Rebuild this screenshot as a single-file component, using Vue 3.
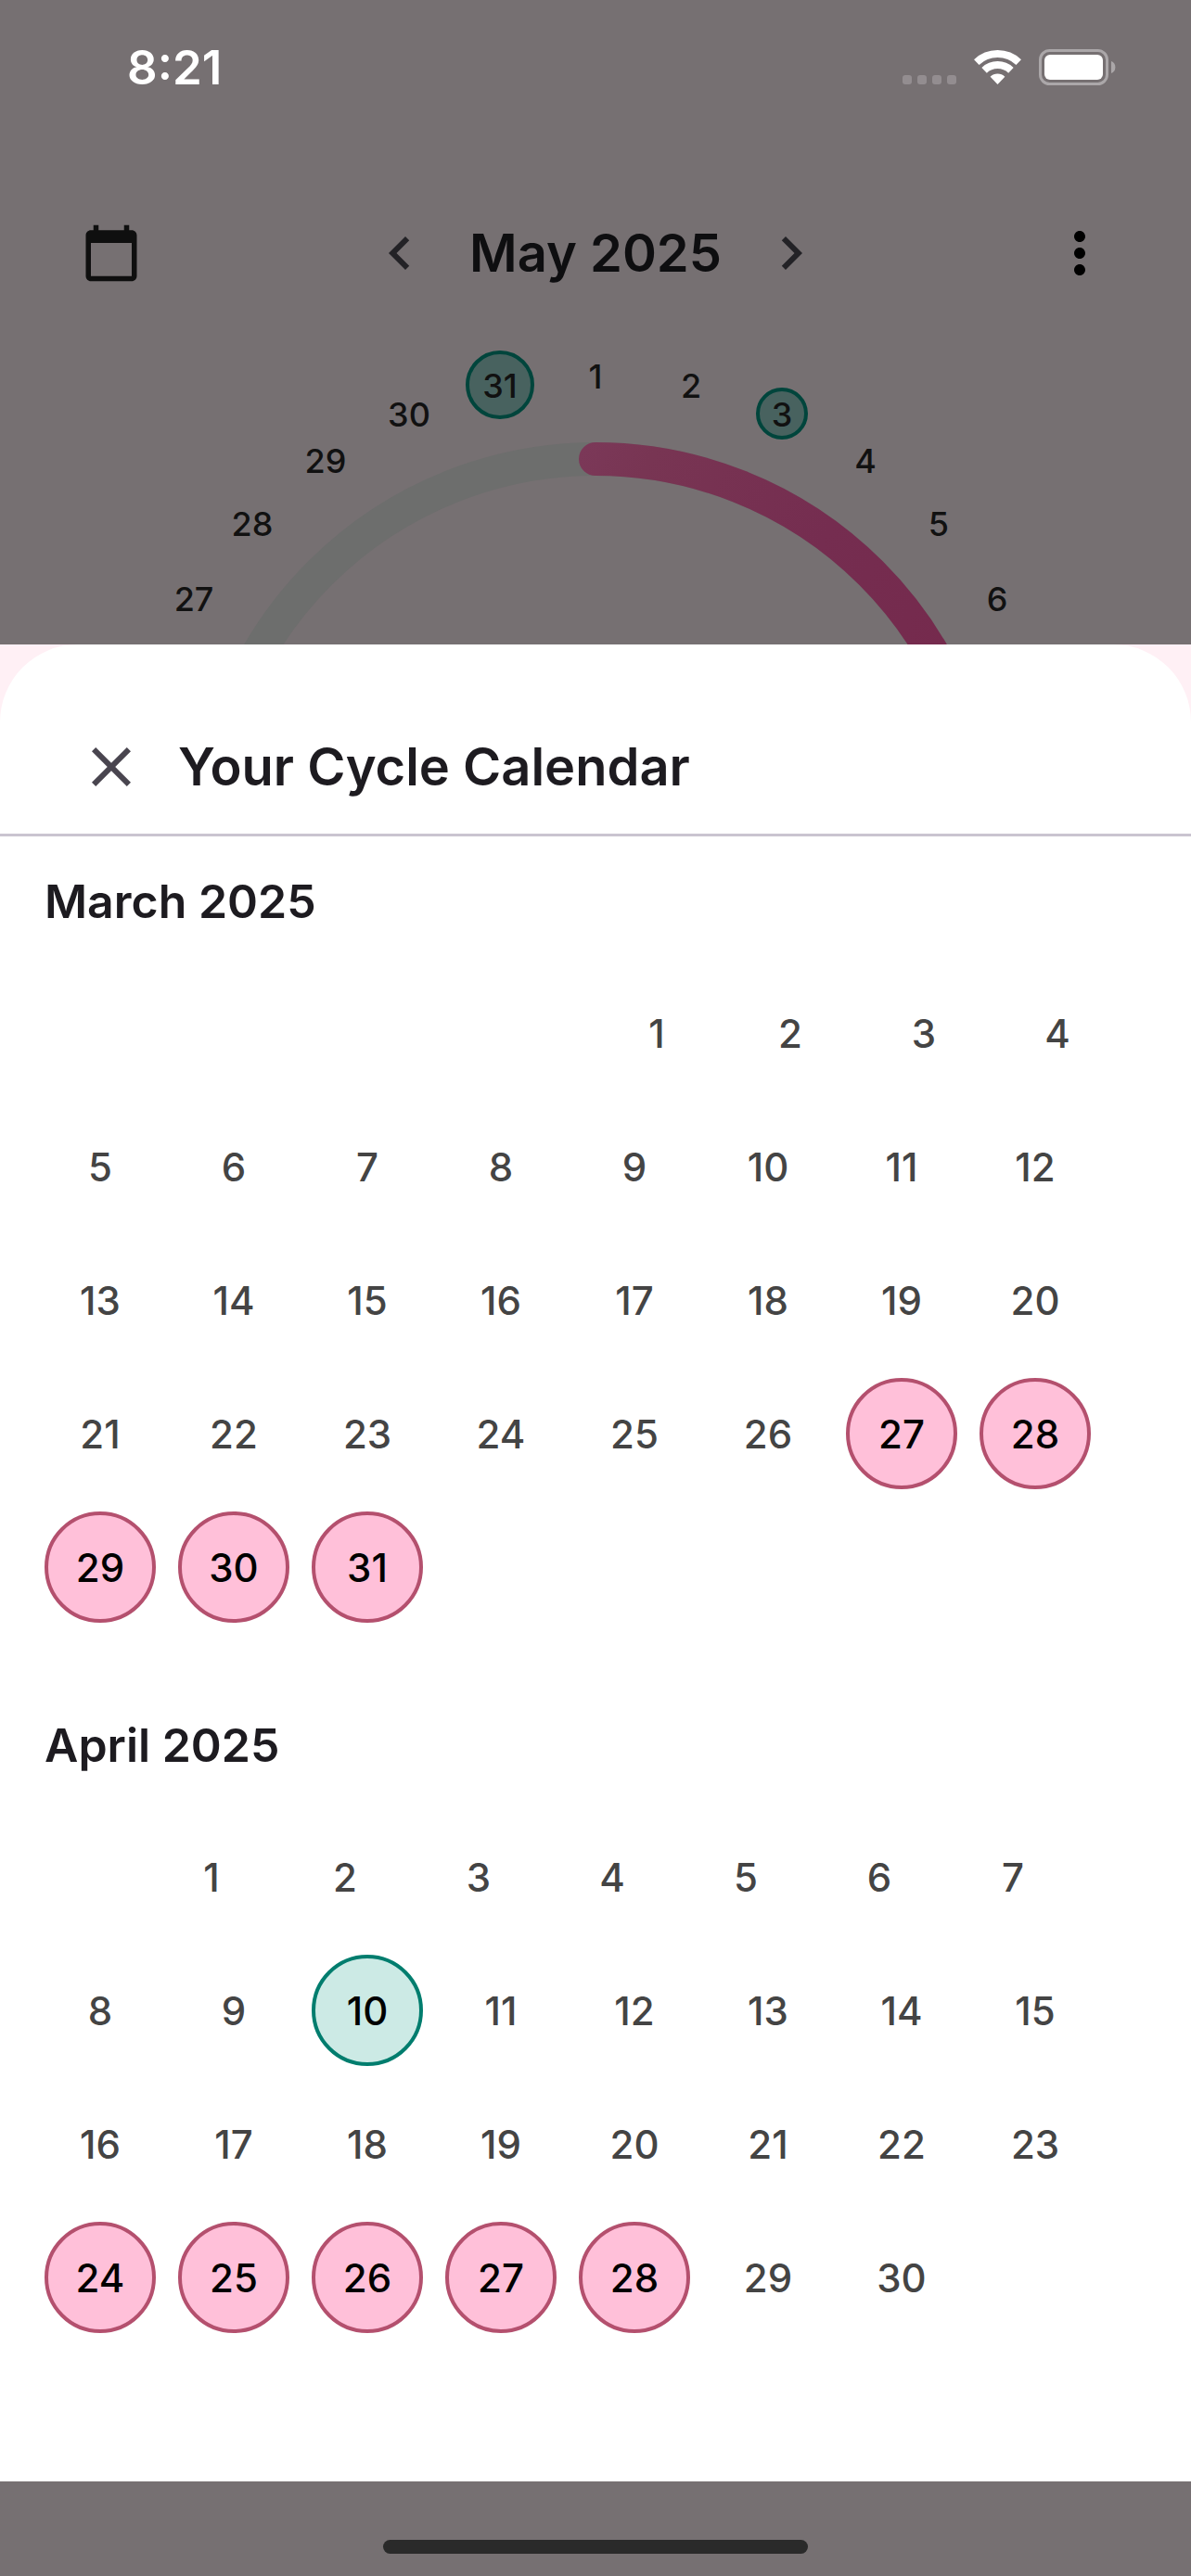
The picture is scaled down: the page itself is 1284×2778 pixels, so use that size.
<script setup>
const months = [
  { name: 'March 2025', lead: 6, days: 31, period: [27, 28, 29, 30, 31], ovulation: [] },
  { name: 'April 2025', lead: 1, days: 30, period: [24, 25, 26, 27, 28], ovulation: [10] },
]

const dayClass = (month, day) => ({
  period: month.period.includes(day),
  ovulation: month.ovulation.includes(day),
})

// Upper part of the cycle dial: one label every 1/31 of a turn, day 1 at the top.
const CENTER = { x: 550, y: 543 }
const LABEL_RADIUS = 510
const marks = { 3: 26, 31: 35 }

const dialDays = [27, 28, 29, 30, 31, 1, 2, 3, 4, 5, 6].map((day) => {
  const angle = ((day - 1) * 2 * Math.PI) / 31
  return {
    day,
    x: Math.round(CENTER.x + LABEL_RADIUS * Math.sin(angle)),
    y: Math.round(CENTER.y - LABEL_RADIUS * Math.cos(angle)),
    mark: marks[day],
  }
})
</script>

<template>
  <div class="screen">
    <header class="status">
      <time class="clock">8:21</time>
      <svg class="status-icons" viewBox="0 0 230 40" aria-hidden="true">
        <g fill="#938d90">
          <rect x="0" y="28" width="10" height="10" rx="3" />
          <rect x="16" y="28" width="10" height="10" rx="3" />
          <rect x="32" y="28" width="10" height="10" rx="3" />
          <rect x="48" y="28" width="10" height="10" rx="3" />
        </g>
        <g fill="none" stroke="#fff" stroke-width="8">
          <path d="M79.8 14.1a33 33 0 0 1 45.4 0" />
          <path d="M88.1 22.8a21 21 0 0 1 28.8 0" />
        </g>
        <path d="M94.6 29.7a11.5 11.5 0 0 1 15.8 0L102.5 38z" fill="#fff" />
        <rect x="148.5" y="1.5" width="72" height="36" rx="10" fill="none" stroke="#aba7a9" stroke-width="3" />
        <rect x="153" y="6" width="63" height="27" rx="6" fill="#fff" />
        <path d="M225 13a7 7 0 0 1 0 13z" fill="#aba7a9" />
      </svg>
    </header>

    <nav class="toolbar">
      <button class="icon-button" type="button" aria-label="Open calendar">
        <svg class="calendar-icon" viewBox="0 0 24 24"><path d="M20 3h-1V1h-2v2H7V1H5v2H4c-1.1 0-2 .9-2 2v16c0 1.1.9 2 2 2h16c1.1 0 2-.9 2-2V5c0-1.1-.9-2-2-2zm0 18H4V8h16v13z" fill="#0f0f0f" /></svg>
      </button>
      <div class="month-switch">
        <button class="icon-button" type="button" aria-label="Previous month">
          <svg class="icon" viewBox="0 0 24 24"><path d="M15.41 7.41 14 6l-6 6 6 6 1.41-1.41L10.83 12z" fill="#232226" /></svg>
        </button>
        <h1 class="current-month">May 2025</h1>
        <button class="icon-button" type="button" aria-label="Next month">
          <svg class="icon" viewBox="0 0 24 24"><path d="M10 6 8.59 7.41 13.17 12l-4.58 4.59L10 18l6-6z" fill="#232226" /></svg>
        </button>
      </div>
      <button class="icon-button" type="button" aria-label="More options">
        <svg class="icon" viewBox="0 0 24 24"><path d="M12 8c1.1 0 2-.9 2-2s-.9-2-2-2-2 .9-2 2 .9 2 2 2zm0 2c-1.1 0-2 .9-2 2s.9 2 2 2 2-.9 2-2-.9-2-2-2zm0 6c-1.1 0-2 .9-2 2s.9 2 2 2 2-.9 2-2-.9-2-2-2z" fill="#000" /></svg>
      </button>
    </nav>

    <div class="dial-window">
      <svg class="dial" viewBox="0 0 1100 1086">
        <defs>
          <linearGradient id="period-arc" gradientUnits="userSpaceOnUse" x1="532" y1="123" x2="930" y2="340">
            <stop offset="0" stop-color="#7b3858" />
            <stop offset="0.15" stop-color="#783553" />
            <stop offset="0.6" stop-color="#752d50" />
            <stop offset="1" stop-color="#752a4d" />
          </linearGradient>
        </defs>
        <circle cx="550" cy="543" r="420" fill="none" stroke="#6d6e6d" stroke-width="36" />
        <path d="M550 123a420 420 0 0 1 420 420" fill="none" stroke="url(#period-arc)" stroke-width="36" stroke-linecap="round" />
        <g v-for="item in dialDays" :key="item.day">
          <circle v-if="item.mark" :cx="item.x" :cy="item.y" :r="item.mark" class="dial-mark" />
          <text :x="item.x" :y="item.y + 14" class="dial-day">{{ item.day }}</text>
        </g>
      </svg>
    </div>

    <div class="sheet-area">
      <main class="sheet">
        <header class="sheet-header">
          <button class="icon-button" type="button" aria-label="Close">
            <svg class="icon" viewBox="0 0 24 24"><path d="M19 6.41 17.59 5 12 10.59 6.41 5 5 6.41 10.59 12 5 17.59 6.41 19 12 13.41 17.59 19 19 17.59 13.41 12z" fill="#49454f" /></svg>
          </button>
          <h2 class="sheet-title">Your Cycle Calendar</h2>
        </header>
        <section v-for="month in months" :key="month.name" class="month">
          <h3 class="month-name">{{ month.name }}</h3>
          <div class="days">
            <span class="lead" :style="{ width: month.lead * 96 + 'px' }"></span>
            <span v-for="day in month.days" :key="day" class="day" :class="dayClass(month, day)">{{ day }}</span>
          </div>
        </section>
      </main>
    </div>

    <footer class="home-bar">
      <span class="home-indicator"></span>
    </footer>
  </div>
</template>

<style>
body {
  background: #767072;
}
</style>

<style scoped>
.screen {
  display: flex;
  flex-direction: column;
  min-height: 100vh;
  background: #767072;
  font-family: Inter, "Liberation Sans", sans-serif;
}

.status {
  display: flex;
  align-items: center;
  justify-content: space-between;
  padding: 41px 81px 0 137px;
}

.clock {
  color: #fff;
  font-size: 51px;
  font-weight: 600;
  line-height: 64px;
}

.status-icons {
  width: 230px;
  height: 40px;
}

.icon-button {
  display: flex;
  align-items: center;
  justify-content: center;
  width: 144px;
  height: 144px;
  padding: 0;
  border: 0;
  background: none;
}

.icon {
  width: 72px;
  height: 72px;
}

.calendar-icon {
  width: 66px;
  height: 66px;
}

.toolbar {
  display: flex;
  align-items: center;
  justify-content: space-between;
  margin-top: 96px;
  padding: 0 48px;
}

.month-switch {
  display: flex;
  align-items: center;
  gap: 3px;
}

.current-month {
  margin: 0;
  color: #0e0e10;
  font-size: 56px;
  font-weight: 600;
  line-height: 72px;
}

.dial-window {
  display: flex;
  flex: 1 0 0;
  justify-content: center;
  min-height: 0;
  overflow: hidden;
  margin-top: 27px;
}

.dial {
  flex: none;
  width: 1100px;
  height: 1086px;
}

.dial-mark {
  fill: #48625f;
  stroke: #00453c;
  stroke-width: 4px;
}

.dial-day {
  fill: #111;
  font-size: 36px;
  font-weight: 500;
  text-anchor: middle;
}

.sheet-area {
  background: #fff0f5;
}

.sheet {
  padding-bottom: 98px;
  border-radius: 84px 84px 0 0;
  background: #fff;
}

.sheet-header {
  display: flex;
  align-items: center;
  padding: 60px 48px 0;
  border-bottom: 3px solid #cac4d0;
}

.sheet-title {
  margin: 0;
  color: #1d1b20;
  font-size: 56px;
  font-weight: 600;
  line-height: 72px;
}

.month {
  padding: 40px 48px 62px;
}

.month-name {
  margin: 0 0 52px;
  color: #1d1b20;
  font-size: 50px;
  font-weight: 600;
  line-height: 60px;
}

.days {
  display: flex;
  flex-wrap: wrap;
  gap: 24px;
}

.day {
  display: flex;
  align-items: center;
  justify-content: center;
  box-sizing: border-box;
  width: 120px;
  height: 120px;
  border: 4px solid transparent;
  border-radius: 50%;
  color: #444;
  font-size: 42px;
  font-weight: 500;
}

.period {
  border-color: #b4506e;
  background: #ffc0d9;
  color: #000;
}

.ovulation {
  border-color: #007d6e;
  background: #cceae5;
  color: #000;
}

.home-bar {
  display: flex;
  justify-content: center;
  padding: 63px 0 24px;
}

.home-indicator {
  width: 458px;
  height: 15px;
  border-radius: 8px;
  background: #2a2a2a;
}
</style>
